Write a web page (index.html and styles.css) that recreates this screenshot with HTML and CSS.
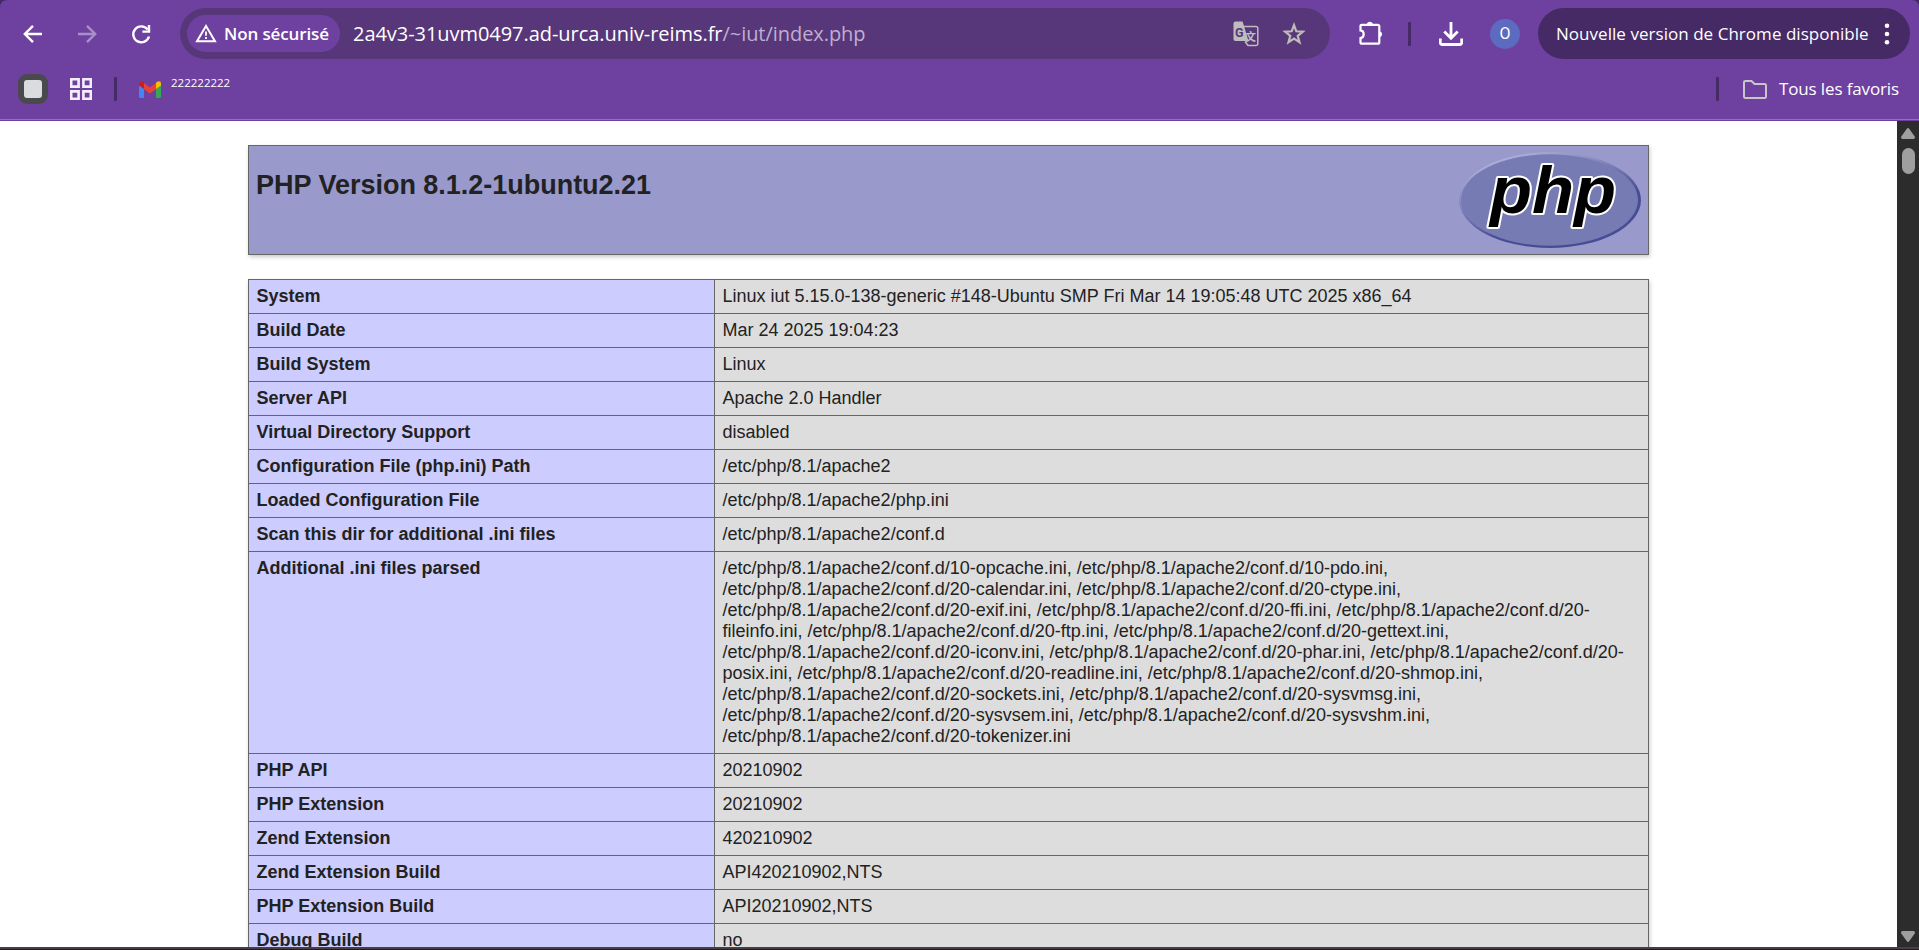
FILE: index.html
```html
<!DOCTYPE html>
<html lang="fr">
<head>
<meta charset="utf-8">
<title>PHP 8.1.2-1ubuntu2.21 - phpinfo()</title>
<link rel="stylesheet" href="styles.css">
</head>
<body>
<div class="window">
  <header class="chrome">
    <svg class="corner corner-left" width="8" height="8" viewBox="0 0 8 8"><path d="M0 0H8Q0 0 0 8Z"/></svg>
    <svg class="corner corner-right" width="8" height="8" viewBox="0 0 8 8"><path d="M8 0H0Q8 0 8 8Z"/></svg>
    <div class="toolbar">
      <svg class="nav back" width="24" height="24" viewBox="0 0 24 24"><path d="M21 12H4M12 3.8 3.8 12 12 20.2"/></svg>
      <svg class="nav forward" width="24" height="24" viewBox="0 0 24 24"><path d="M3 12H20M12 3.8 20.2 12 12 20.2"/></svg>
      <svg class="nav reload" width="24" height="24" viewBox="0 0 24 24"><path d="M18.6 7.4A8 8 0 1 0 20 14.5M20 3V9.6H13.4"/></svg>
      <div class="omnibox">
        <div class="security">
          <svg width="22" height="19" viewBox="0 0 22 19"><path d="M11 2 20 17.2H2Z" fill="none" stroke="#fff" stroke-width="2"/><path d="M10.1 7.4h1.8v4.4h-1.8zM10.1 13h1.8v1.9h-1.8z" fill="#fff"/></svg>
          <span class="security-label">Non sécurisé</span>
        </div>
        <div class="url"><span class="host">2a4v3-31uvm0497.ad-urca.univ-reims.fr</span><span class="path">/~iut/index.php</span></div>
        <svg class="translate" width="26" height="26" viewBox="0 0 26 26">
          <path d="M2.5 .5H9.6L15.5 20H2.5A2 2 0 0 1 .5 18V2.5A2 2 0 0 1 2.5 .5Z" fill="#bdbdbd"/>
          <path d="M10.5 5.5H23A1.8 1.8 0 0 1 24.8 7.3V22.7A1.8 1.8 0 0 1 23 24.5H15L12 20.5" fill="none" stroke="#bdbdbd" stroke-width="1.5"/>
          <text class="latin" x="2" y="15.500">G</text>
          <text class="han" x="12" y="19.500">文</text>
        </svg>
        <svg class="star" width="24" height="24" viewBox="0 0 24 24"><path d="M12 3.2 14.3 9.3 20.8 9.7 15.7 13.8 17.5 20.3 12 16.6 6.5 20.3 8.3 13.8 3.2 9.7 9.7 9.3Z"/></svg>
      </div>
      <svg class="puzzle" width="26" height="26" viewBox="0 0 26 26"><path d="M3.7 3.8H19.8A1.5 1.5 0 0 1 21.3 5.3V21.2A1.5 1.5 0 0 1 19.8 22.7H3.7A1.2 1.2 0 0 1 2.5 21.5V17.2C4.7 17 5.7 15.3 5.7 13.3S4.7 9.6 2.5 9.4V5A1.2 1.2 0 0 1 3.7 3.8Z" fill="none" stroke="#fff" stroke-width="2.2"/><path d="M8.8 3.5A3.2 3.2 0 0 1 15.1 3.5ZM21.5 10.2A3.2 3.2 0 0 1 21.5 16.5Z" fill="#fff"/></svg>
      <span class="divider toolbar-divider"></span>
      <svg class="download" width="24" height="24" viewBox="0 0 24 24"><path d="M12 0V15M5.3 9.5 12 16.2 18.7 9.5M1.3 16.5V20.7A1.8 1.8 0 0 0 3.1 22.5H20.9A1.8 1.8 0 0 0 22.7 20.7V16.5" fill="none" stroke="#fff" stroke-width="2.8"/></svg>
      <span class="avatar">O</span>
      <div class="update">
        <span class="update-label">Nouvelle version de Chrome disponible</span>
        <svg width="6" height="22" viewBox="0 0 6 22"><circle cx="3" cy="2.7" r="2.3"/><circle cx="3" cy="11" r="2.3"/><circle cx="3" cy="19.3" r="2.3"/></svg>
      </div>
    </div>
    <div class="bookmarks">
      <span class="tabgroup"></span>
      <svg class="apps" width="22" height="22" viewBox="0 0 22 22"><path d="M1.2 1.2H8.6V8.6H1.2ZM13.4 1.2H20.8V8.6H13.4ZM1.2 13.4H8.6V20.8H1.2ZM13.4 13.4H20.8V20.8H13.4Z"/></svg>
      <span class="divider"></span>
      <svg class="gmail" width="22" height="17" viewBox="0 0 22 17"><path d="M0 4 5 7.5V17H1.5A1.5 1.5 0 0 1 0 15.5Z" fill="#4285f4"/><path d="M22 4 17 7.5V17H20.5A1.5 1.5 0 0 0 22 15.5Z" fill="#34a853"/><path d="M5 2 11 6.6 17 2V8L11 12.6 5 8Z" fill="#ea4335"/><path d="M0 2.5C0 .3 2.2-.5 4 .9L5 1.8V8L0 4.5Z" fill="#c5221f"/><path d="M22 2.5C22 .3 19.8-.5 18 .9L17 1.8V8L22 4.5Z" fill="#fbbc04"/></svg>
      <span class="bookmark-label">222222222</span>
      <span class="divider favorites-divider"></span>
      <svg class="folder" width="24" height="19" viewBox="0 0 24 19"><path d="M2.2 1H8.5L11.5 4H21.8A1.2 1.2 0 0 1 23 5.2V16.8A1.2 1.2 0 0 1 21.8 18H2.2A1.2 1.2 0 0 1 1 16.8V2.2A1.2 1.2 0 0 1 2.2 1Z"/></svg>
      <span class="favorites-label">Tous les favoris</span>
    </div>
  </header>
  <div class="viewport">
    <main class="page">
      <div class="banner">
        <h1>PHP Version 8.1.2-1ubuntu2.21</h1>
        <svg class="logo" width="182" height="96" viewBox="0 0 182 96">
          <defs>
            <linearGradient id="rim" x1=".2" y1="0" x2=".8" y2="1"><stop offset="0" stop-color="#b5b8df"/><stop offset=".4" stop-color="#777bb3"/><stop offset=".65" stop-color="#484c94"/><stop offset="1" stop-color="#484c94"/></linearGradient>
          </defs>
          <ellipse cx="91" cy="48" rx="91" ry="48" fill="url(#rim)"/>
          <ellipse cx="90.5" cy="48" rx="88.5" ry="45.7" fill="#777bb3"/>
          <text class="wordmark" x="31" y="61" textLength="126" lengthAdjust="spacingAndGlyphs">php</text>
        </svg>
      </div>
      <table>
        <tr><th>System</th><td>Linux iut 5.15.0-138-generic #148-Ubuntu SMP Fri Mar 14 19:05:48 UTC 2025 x86_64</td></tr>
        <tr><th>Build Date</th><td>Mar 24 2025 19:04:23</td></tr>
        <tr><th>Build System</th><td>Linux</td></tr>
        <tr><th>Server API</th><td>Apache 2.0 Handler</td></tr>
        <tr><th>Virtual Directory Support</th><td>disabled</td></tr>
        <tr><th>Configuration File (php.ini) Path</th><td>/etc/php/8.1/apache2</td></tr>
        <tr><th>Loaded Configuration File</th><td>/etc/php/8.1/apache2/php.ini</td></tr>
        <tr><th>Scan this dir for additional .ini files</th><td>/etc/php/8.1/apache2/conf.d</td></tr>
        <tr><th>Additional .ini files parsed</th><td>/etc/php/8.1/apache2/conf.d/10-opcache.ini, /etc/php/8.1/apache2/conf.d/10-pdo.ini,<br>/etc/php/8.1/apache2/conf.d/20-calendar.ini, /etc/php/8.1/apache2/conf.d/20-ctype.ini,<br>/etc/php/8.1/apache2/conf.d/20-exif.ini, /etc/php/8.1/apache2/conf.d/20-ffi.ini, /etc/php/8.1/apache2/conf.d/20-<br>fileinfo.ini, /etc/php/8.1/apache2/conf.d/20-ftp.ini, /etc/php/8.1/apache2/conf.d/20-gettext.ini,<br>/etc/php/8.1/apache2/conf.d/20-iconv.ini, /etc/php/8.1/apache2/conf.d/20-phar.ini, /etc/php/8.1/apache2/conf.d/20-<br>posix.ini, /etc/php/8.1/apache2/conf.d/20-readline.ini, /etc/php/8.1/apache2/conf.d/20-shmop.ini,<br>/etc/php/8.1/apache2/conf.d/20-sockets.ini, /etc/php/8.1/apache2/conf.d/20-sysvmsg.ini,<br>/etc/php/8.1/apache2/conf.d/20-sysvsem.ini, /etc/php/8.1/apache2/conf.d/20-sysvshm.ini,<br>/etc/php/8.1/apache2/conf.d/20-tokenizer.ini</td></tr>
        <tr><th>PHP API</th><td>20210902</td></tr>
        <tr><th>PHP Extension</th><td>20210902</td></tr>
        <tr><th>Zend Extension</th><td>420210902</td></tr>
        <tr><th>Zend Extension Build</th><td>API420210902,NTS</td></tr>
        <tr><th>PHP Extension Build</th><td>API20210902,NTS</td></tr>
        <tr><th>Debug Build</th><td>no</td></tr>
      </table>
    </main>
    <div class="scrollbar">
      <svg width="14" height="11" viewBox="0 0 14 11"><path d="M5.8 .8Q7-.6 8.2 .8L13.7 8.5Q14.5 10.6 12.5 11H1.5Q-.5 10.6 .3 8.5Z"/></svg>
      <span class="thumb"></span>
      <svg class="down" width="14" height="11" viewBox="0 0 14 11"><path d="M5.8 10.2Q7 11.6 8.2 10.2L13.7 2.5Q14.5 .4 12.5 0H1.5Q-.5 .4 .3 2.5Z"/></svg>
    </div>
  </div>
  <div class="edge"></div>
</div>
</body>
</html>
```
FILE: styles.css
```css
* { box-sizing: border-box; }
body { margin: 0; background: #fff; }
svg { display: block; flex: none; }
.window { width: 1919px; height: 950px; display: flex; flex-direction: column; overflow: hidden; }

.chrome { position: relative; flex: none; height: 121px; background: #6e41a1; box-shadow: inset 0 -1px #6e41a1, inset 0 -2px #9470bb; font-family: "Open Sans", "Noto Sans", sans-serif; color: #fff; }
.corner { position: absolute; top: 0; fill: #462a66; }
.corner-left { left: 0; }
.corner-right { right: 0; }
.toolbar { display: flex; align-items: center; height: 67px; padding: 0 9px 0 21px; }
.nav { fill: none; stroke: #fff; stroke-width: 2.4; }
.forward { margin-left: 30px; stroke: #a98fc8; }
.reload { margin-left: 30px; }
.omnibox { display: flex; flex: none; align-items: center; width: 1150px; height: 51px; margin-left: 27px; padding: 0 24px 0 7px; border-radius: 26px; background: #57377a; }
.security { display: flex; align-items: center; gap: 7px; width: 153px; height: 37px; padding-left: 8px; border-radius: 19px; background: #6e41a1; white-space: nowrap; }
.security-label { font-size: 17px; font-weight: 600; line-height: 24px; letter-spacing: -.13px; }
.url { flex: 1; margin-left: 13px; font-size: 20px; line-height: 28px; letter-spacing: -.05px; white-space: nowrap; }
.path { color: #bfaed0; }
.latin { font: bold 12.5px Roboto, sans-serif; fill: #57377a; }
.han { font: bold 11px "Noto Sans CJK SC", sans-serif; fill: #bdbdbd; }
.star { margin-left: 23px; fill: none; stroke: #c0bdb8; stroke-width: 2.2; }
.puzzle { margin-left: 28px; }
.divider { flex: none; width: 3px; height: 24px; border-radius: 1px; background: #462a66; }
.toolbar-divider { margin-left: 24px; }
.download { margin-left: 28px; }
.avatar { display: flex; flex: none; align-items: center; justify-content: center; width: 30px; height: 30px; margin-left: 27px; border-radius: 50%; background: #5c6bc0; font: 16px Roboto, sans-serif; }
.update { display: flex; flex: none; align-items: center; justify-content: space-between; width: 372px; height: 51px; margin-left: 18px; padding: 0 20px 0 18px; border-radius: 26px; background: #462a66; white-space: nowrap; }
.update svg { fill: #fff; }
.update-label { font-size: 17px; line-height: 24px; letter-spacing: .04px; }
.bookmarks { display: flex; align-items: center; height: 44px; padding: 0 20px 0 18px; }
.tabgroup { width: 30px; height: 30px; border: 6px solid #4a4a4d; border-radius: 9px; background: #dadce0; }
.apps { margin-left: 22px; fill: none; stroke: #f4eef9; stroke-width: 2.6; }
.apps + .divider { margin-left: 22px; }
.gmail { margin-left: 22px; }
.bookmark-label { margin: -13px 0 0 10px; font-size: 11.5px; line-height: 16px; }
.favorites-divider { margin-left: auto; }
.folder { margin-left: 24px; fill: none; stroke: #c7c7c7; stroke-width: 2; }
.favorites-label { margin-left: 12px; font-size: 17px; line-height: 24px; letter-spacing: -.13px; white-space: nowrap; }

.viewport { display: flex; flex: 1; min-height: 0; overflow: hidden; }
.page { flex: 1; padding-top: 24px; font: 18px/21px "Liberation Sans", Arial, sans-serif; color: #222; }
.banner { display: flex; justify-content: space-between; width: 1401px; height: 110px; margin: 0 auto; padding: 6px 7px 6px 8px; border: 1px solid #666; background: #99c; box-shadow: 1px 2px 4px #ccc; }
.banner h1 { margin: 18px 0 0 -1px; font-size: 27px; line-height: 31px; letter-spacing: -.02px; }
.wordmark { font: italic bold 66px "Liberation Sans", Arial, sans-serif; fill: #000; stroke: #fff; stroke-width: 4; paint-order: stroke; stroke-linejoin: round; }
table { width: 1401px; margin: 24px auto; border-collapse: collapse; table-layout: fixed; box-shadow: 1px 2px 4px #ccc; }
th, td { padding: 6px 7px; border: 1px solid #666; vertical-align: baseline; text-align: left; }
th { width: 466px; padding-left: 7.5px; background: #ccf; }
td { padding-left: 7.5px; background: #ddd; }
.scrollbar { display: flex; flex: none; flex-direction: column; align-items: center; width: 22px; padding: 7px 0 5px; background: #2c2c2c; }
.scrollbar svg { fill: #9f9f9f; }
.thumb { width: 13px; height: 26px; margin-top: 9px; border-radius: 7px; background: #9f9f9f; }
.down { margin-top: auto; }
.edge { flex: none; height: 3px; background: linear-gradient(#434143 0 2px, #2c1520 2px); }
```
